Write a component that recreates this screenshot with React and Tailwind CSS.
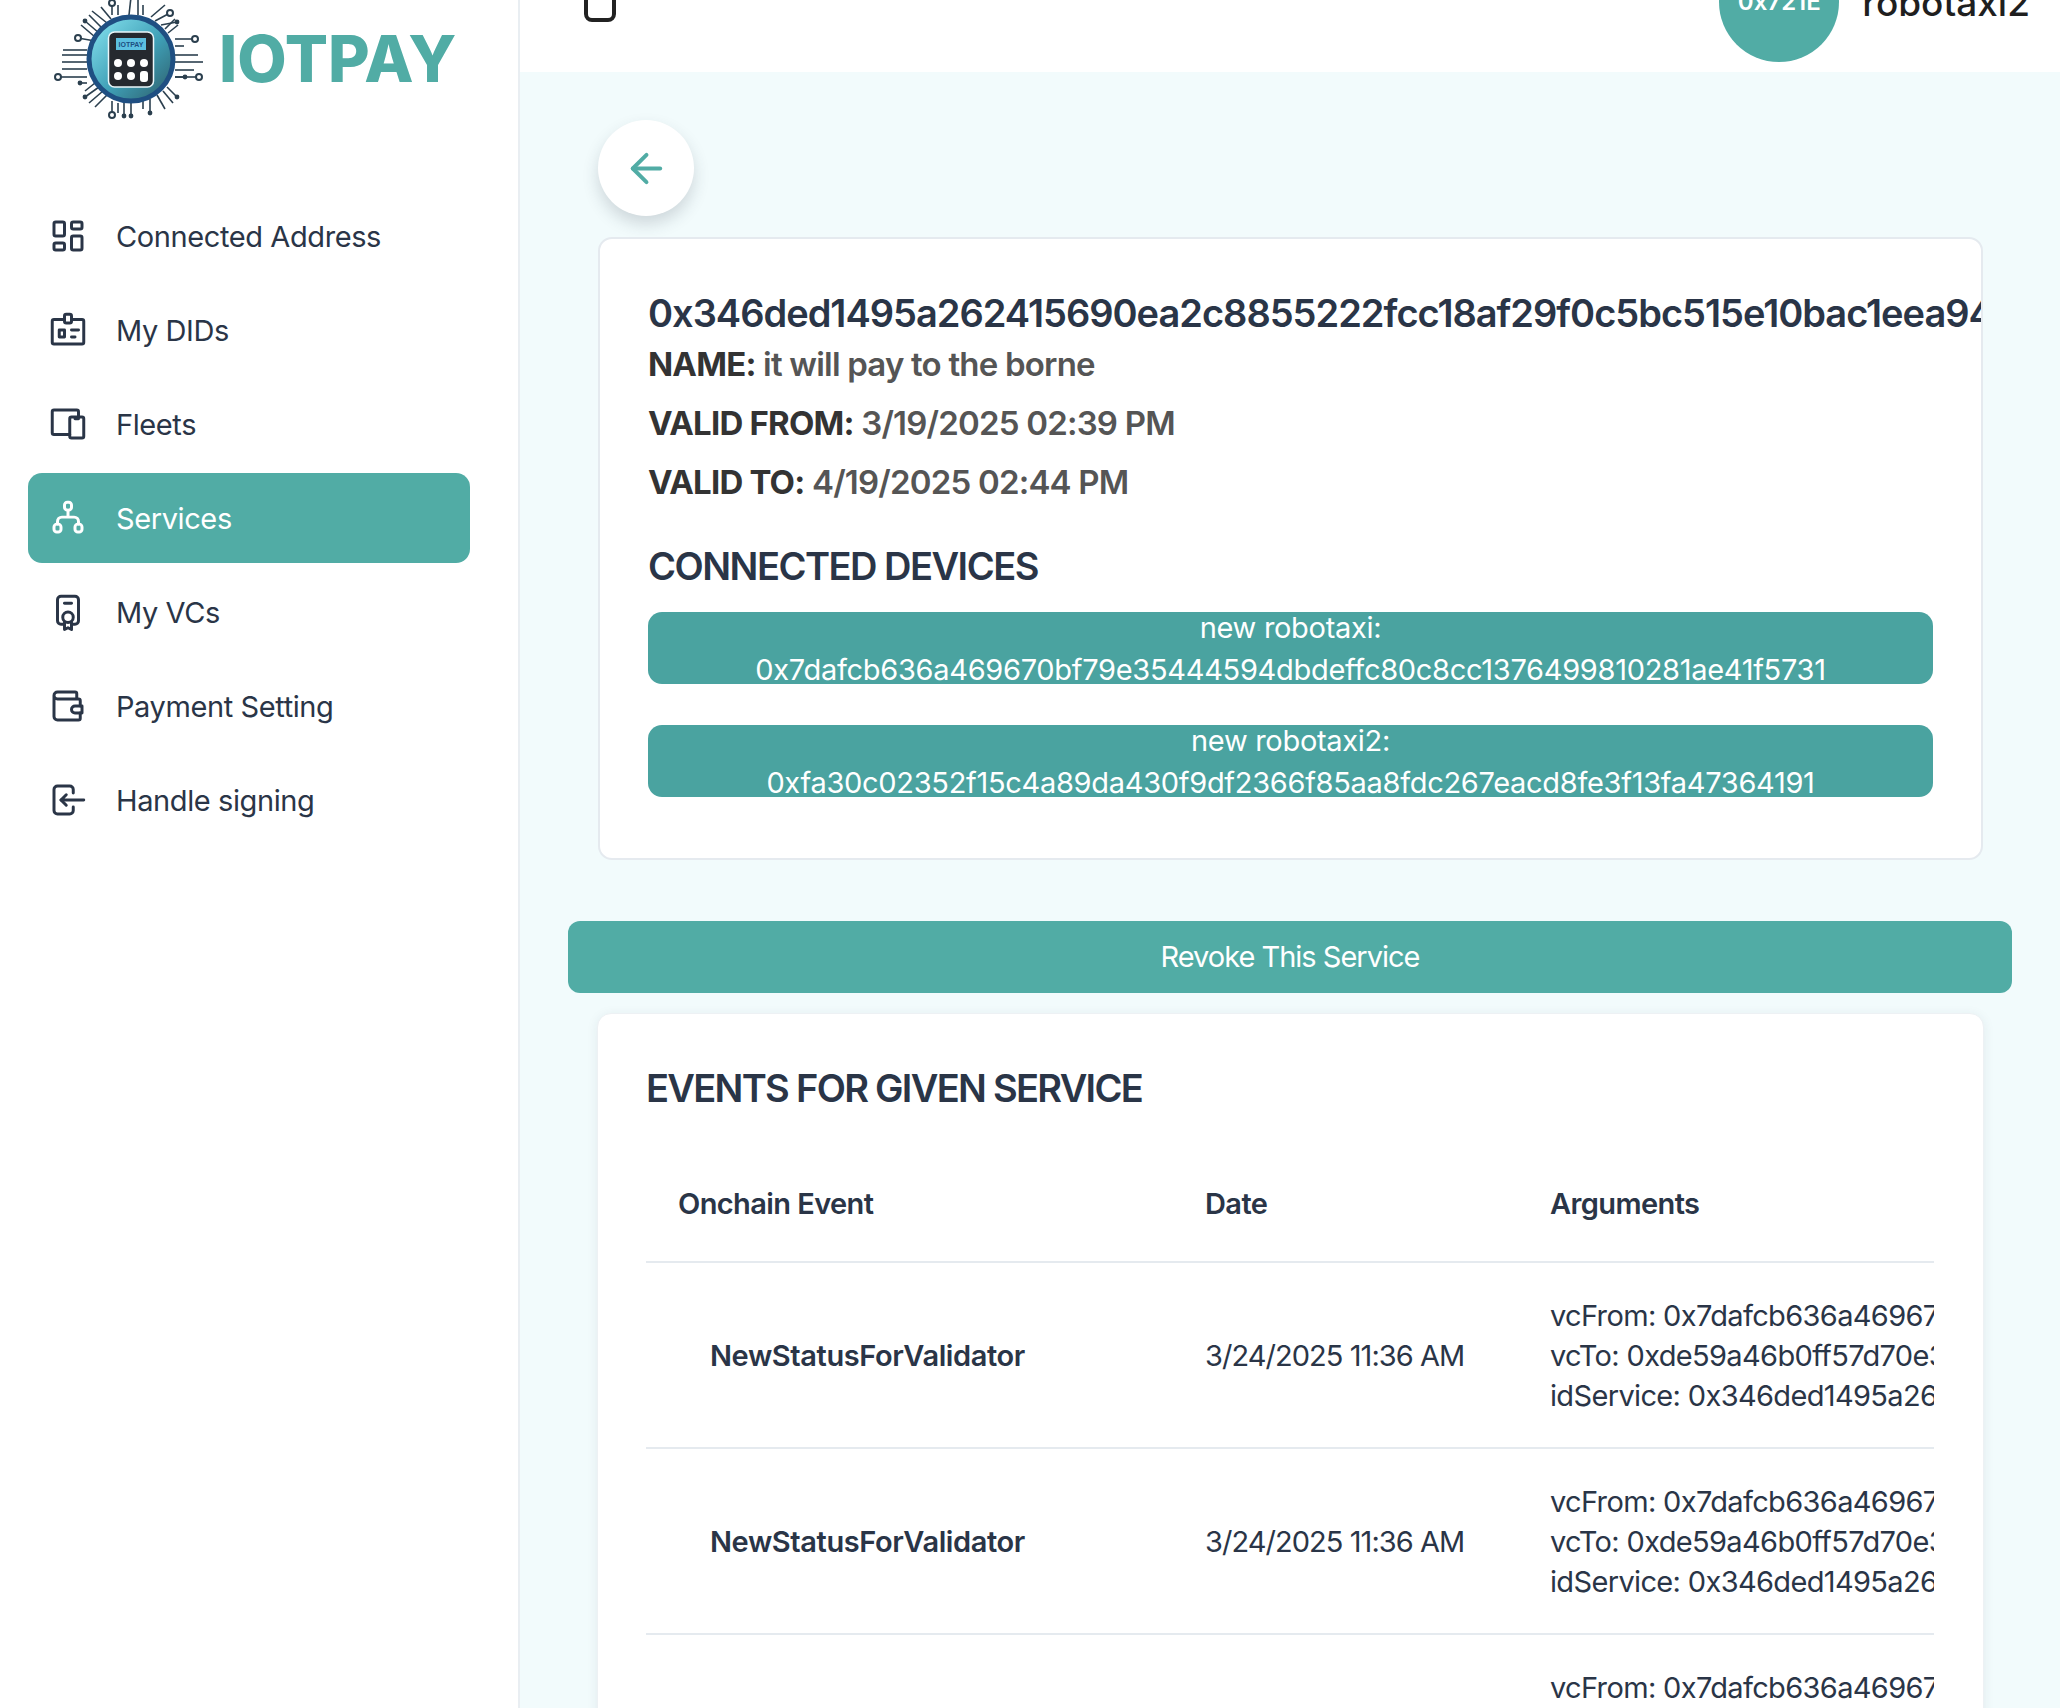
import { ArrowLeft } from "lucide-react";
import { TbLayoutDashboard, TbIdBadge2, TbDevices, TbCertificate2, TbWallet, TbLogin } from "react-icons/tb";

function ServicesIcon({ size, className }) {
  return (
    <svg width={size} height={size} viewBox="0 0 24 24" fill="none" stroke="currentColor" strokeWidth="1.7" strokeLinecap="round" strokeLinejoin="round" className={className}>
      <rect x="10" y="3" width="4" height="4.5" rx="1.6" />
      <rect x="4" y="15.5" width="4" height="4.5" rx="1.6" />
      <rect x="16" y="15.5" width="4" height="4.5" rx="1.6" />
      <path d="M12 7.5v4M6 15.5v-1.5a2.5 2.5 0 0 1 2.5 -2.5h7a2.5 2.5 0 0 1 2.5 2.5v1.5" />
    </svg>
  );
}

const NAV = [
  { label: "Connected Address", icon: TbLayoutDashboard },
  { label: "My DIDs", icon: TbIdBadge2 },
  { label: "Fleets", icon: TbDevices },
  { label: "Services", icon: ServicesIcon, active: true },
  { label: "My VCs", icon: TbCertificate2 },
  { label: "Payment Setting", icon: TbWallet },
  { label: "Handle signing", icon: TbLogin },
];

const EVENTS = [1, 2, 3];

// chip traces, relative to the centre of the logo: x1, y1, x2, y2, end (0 none, 1 ring, 2 dot)
const TRACES = [
  [-13, -44, -13, -54, 0], [-19, -44, -19, -56, 1], [-2, -44, 0, -62, 0], [7, -44, 7, -62, 2], [12, -44, 12, -54, 0],
  [20, -42, 34, -54, 0], [24, -38, 39, -46, 1], [30, -34, 46, -37, 2], [34, -30, 44, -40, 0], [37, -26, 47, -34, 0],
  [44, -20, 64, -20, 1], [44, -13, 53, -13, 0], [44, -4, 67, -4, 0], [44, 3, 72, 3, 0], [44, 11, 63, 11, 0], [44, 18, 68, 18, 1], [44, 18, 54, 18, 2],
  [36, 28, 46, 38, 2], [32, 32, 42, 44, 0], [26, 36, 34, 50, 0],
  [19, 40, 19, 54, 2], [12, 42, 12, 50, 0], [0, 44, 0, 57, 2], [-7, 44, -7, 57, 2], [-13, 44, -13, 54, 0], [-19, 42, -19, 56, 1],
  [-24, 36, -36, 48, 0], [-28, 32, -42, 44, 0], [-32, 28, -46, 38, 2], [-36, 24, -46, 32, 0],
  [-44, 24, -51, 24, 2], [-44, 18, -73, 18, 1], [-44, 10, -69, 10, 0], [-44, 3, -69, 3, 0], [-44, -4, -69, -4, 0], [-44, -9, -68, -9, 0],
  [-36, -18, -53, -21, 1], [-32, -26, -46, -38, 2], [-36, -22, -50, -34, 0], [-28, -30, -42, -44, 0], [-24, -36, -39, -48, 0], [-20, -40, -30, -52, 0],
];

function LogoMark() {
  return (
    <svg width="160" height="160" viewBox="-80 -80 160 160" className="shrink-0">
      <defs>
        <linearGradient id="chip" x1="0" y1="0" x2="1" y2="1">
          <stop offset="0" stopColor="#8be8f4" />
          <stop offset="0.55" stopColor="#3f9fb6" />
          <stop offset="1" stopColor="#2c5a66" />
        </linearGradient>
      </defs>
      {TRACES.map(([x1, y1, x2, y2, end], i) => (
        <g key={i}>
          <line x1={x1} y1={y1} x2={x2} y2={y2} stroke="#2b3f4e" strokeWidth="1.6" />
          {end === 1 ? <circle cx={x2} cy={y2} r="3" fill="#fff" stroke="#2b3f4e" strokeWidth="2" /> : null}
          {end === 2 ? <circle cx={x2} cy={y2} r="2.4" fill="#2b3f4e" /> : null}
        </g>
      ))}
      <circle r="42" fill="url(#chip)" stroke="#1f4f82" strokeWidth="5" />
      <rect x="-22.5" y="-27" width="45" height="55" rx="6" fill="#25292f" stroke="#eaf6fa" strokeWidth="1.5" />
      <rect x="-15" y="-21" width="30" height="12" fill="#5cc0e0" />
      <text x="0" y="-12" textAnchor="middle" fontSize="7" fontFamily="Liberation Sans" fill="#1d4f80" fontWeight="700">IOTPAY</text>
      {[-13, 0, 13].map((cx) => (
        <g key={cx}>
          <circle cx={cx} cy="4" r="4" fill="#fff" />
          {cx < 13 ? <circle cx={cx} cy="17" r="4" fill="#fff" /> : <rect x="9" y="12" width="8" height="11" rx="3" fill="#fff" />}
        </g>
      ))}
    </svg>
  );
}

function Sidebar() {
  return (
    <aside className="w-[520px] shrink-0 bg-white border-r-2 border-[#e9eef2]">
      <div className="flex items-center h-[160px] -mt-[21px] pl-[51px]">
        <LogoMark />
        <span className="ml-[8px] text-[64px] font-extrabold text-[#51aca5]">IOTPAY</span>
      </div>
      <nav className="flex flex-col gap-1 mt-[52px] ml-[28px] w-[442px]">
        {NAV.map(({ label, icon: Icon, active }) => (
          <a
            key={label}
            className={`flex items-center h-[90px] rounded-[14px] pl-[19px] gap-[27px] text-[29px] -tracking-[0.4px] ${
              active ? "bg-[#51aca5] text-white" : "text-[#2a3547]"
            }`}
          >
            <Icon size={42} strokeWidth={1.7} className="shrink-0" />
            <span className="mt-[2px]">{label}</span>
          </a>
        ))}
      </nav>
    </aside>
  );
}

function Header() {
  return (
    <header className="h-[130px] -mt-[58px] bg-white flex items-start justify-between pl-[64px] pr-[30px]">
      <div className="mt-[20px] w-[32px] h-[60px] rounded-[8px] border-[4px] border-[#222]" />
      <div className="flex items-center gap-[23px]">
        <div className="w-[120px] h-[120px] rounded-full bg-[#51aca5] text-white flex items-center justify-center text-[24px] font-semibold">
          0x721E
        </div>
        <span className="text-[37px] font-medium text-[#1f1f1f] mt-[2px]">robotaxi2</span>
      </div>
    </header>
  );
}

function DeviceBar({ name, address }) {
  return (
    <div className="h-[72px] bg-[#4aa3a0] rounded-[14px] overflow-hidden text-white text-center text-[29px] leading-[42px] -tracking-[0.3px]">
      <div className="-mt-[5px]">{name}:</div>
      <div>{address}</div>
    </div>
  );
}

function ServiceCard() {
  return (
    <section className="mt-[21px] h-[623px] bg-white border-2 border-[#e5eaef] rounded-[14px] overflow-hidden pl-[48px] pr-[48px] pt-[50px]">
      <h1 className="text-[38px] leading-[48px] font-semibold text-[#2a3547] whitespace-nowrap -tracking-[1px]">
        0x346ded1495a262415690ea2c8855222fcc18af29f0c5bc515e10bac1eea94
      </h1>
      <div className="mt-[5px] flex flex-col gap-[14px] text-[33px] leading-[45px] font-semibold text-[#555] -tracking-[0.8px]">
        <p><b className="font-bold text-[#333]">NAME:</b> it will pay to the borne</p>
        <p><b className="font-bold text-[#333]">VALID FROM:</b> 3/19/2025 02:39 PM</p>
        <p><b className="font-bold text-[#333]">VALID TO:</b> 4/19/2025 02:44 PM</p>
      </div>
      <h2 className="mt-[37px] text-[38px] leading-[48px] font-semibold text-[#2a3547] -tracking-[1.5px]">CONNECTED DEVICES</h2>
      <div className="mt-[22px] flex flex-col gap-[41px]">
        <DeviceBar name="new robotaxi" address="0x7dafcb636a469670bf79e35444594dbdeffc80c8cc1376499810281ae41f5731" />
        <DeviceBar name="new robotaxi2" address="0xfa30c02352f15c4a89da430f9df2366f85aa8fdc267eacd8fe3f13fa47364191" />
      </div>
    </section>
  );
}

function EventsCard() {
  return (
    <section className="mt-[20px] -mx-px bg-white rounded-t-[14px] shadow-[0_2px_12px_rgba(42,53,71,0.08)] border border-[#edf1f4] pl-[48px] pr-[48px] pt-[50px]">
      <h2 className="text-[38px] leading-[48px] font-semibold text-[#2a3547] -tracking-[1.7px]">EVENTS FOR GIVEN SERVICE</h2>
      <table className="mt-[33px] w-[1288px] table-fixed text-[29px] text-[#2a3547]">
        <colgroup>
          <col className="w-[526px]" />
          <col className="w-[345px]" />
          <col />
        </colgroup>
        <thead>
          <tr className="h-[117px] border-b-2 border-[#e5eaef] text-left -tracking-[0.6px]">
            <th className="pl-[32px] pt-[2px] font-semibold">Onchain Event</th>
            <th className="pl-[33px] pt-[2px] font-semibold">Date</th>
            <th className="pl-[33px] pt-[2px] font-semibold">Arguments</th>
          </tr>
        </thead>
        <tbody>
          {EVENTS.map((n) => (
            <tr key={n} className="h-[186px] border-b-2 border-[#e5eaef]">
              <td className="pl-[64px] pt-[2px] font-semibold -tracking-[0.4px]">NewStatusForValidator</td>
              <td className="pl-[33px] pt-[2px] -tracking-[0.95px]">3/24/2025 11:36 AM</td>
              <td className="pl-[33px] pt-[2px] overflow-hidden whitespace-nowrap leading-[40px] -tracking-[0.65px]">
                <div>vcFrom: 0x7dafcb636a469670bf79e35444594dbdeffc80c8</div>
                <div>vcTo: 0xde59a46b0ff57d70e35444594dbdeffc80c8cc13</div>
                <div>idService: 0x346ded1495a262415690ea2c8855222f</div>
              </td>
            </tr>
          ))}
        </tbody>
      </table>
    </section>
  );
}

export default function App() {
  return (
    <div className="h-[1708px] overflow-hidden flex bg-[#f2fbfc] font-['Inter','Noto_Sans',sans-serif]">
      <Sidebar />
      <main className="flex-1 min-w-0">
        <Header />
        <div className="pl-[78px] pr-[77px] pt-[48px]">
          <button className="w-[96px] h-[96px] rounded-full bg-white flex items-center justify-center shadow-[0_8px_16px_rgba(42,53,71,0.18)]">
            <ArrowLeft size={47} strokeWidth={2} className="text-[#51aca5]" />
          </button>
          <ServiceCard />
          <button className="mt-[61px] -mx-[30px] w-[1444px] h-[72px] rounded-[12px] bg-[#51aca5] text-white text-[29px] -tracking-[1px] block">
            Revoke This Service
          </button>
          <EventsCard />
        </div>
      </main>
    </div>
  );
}
